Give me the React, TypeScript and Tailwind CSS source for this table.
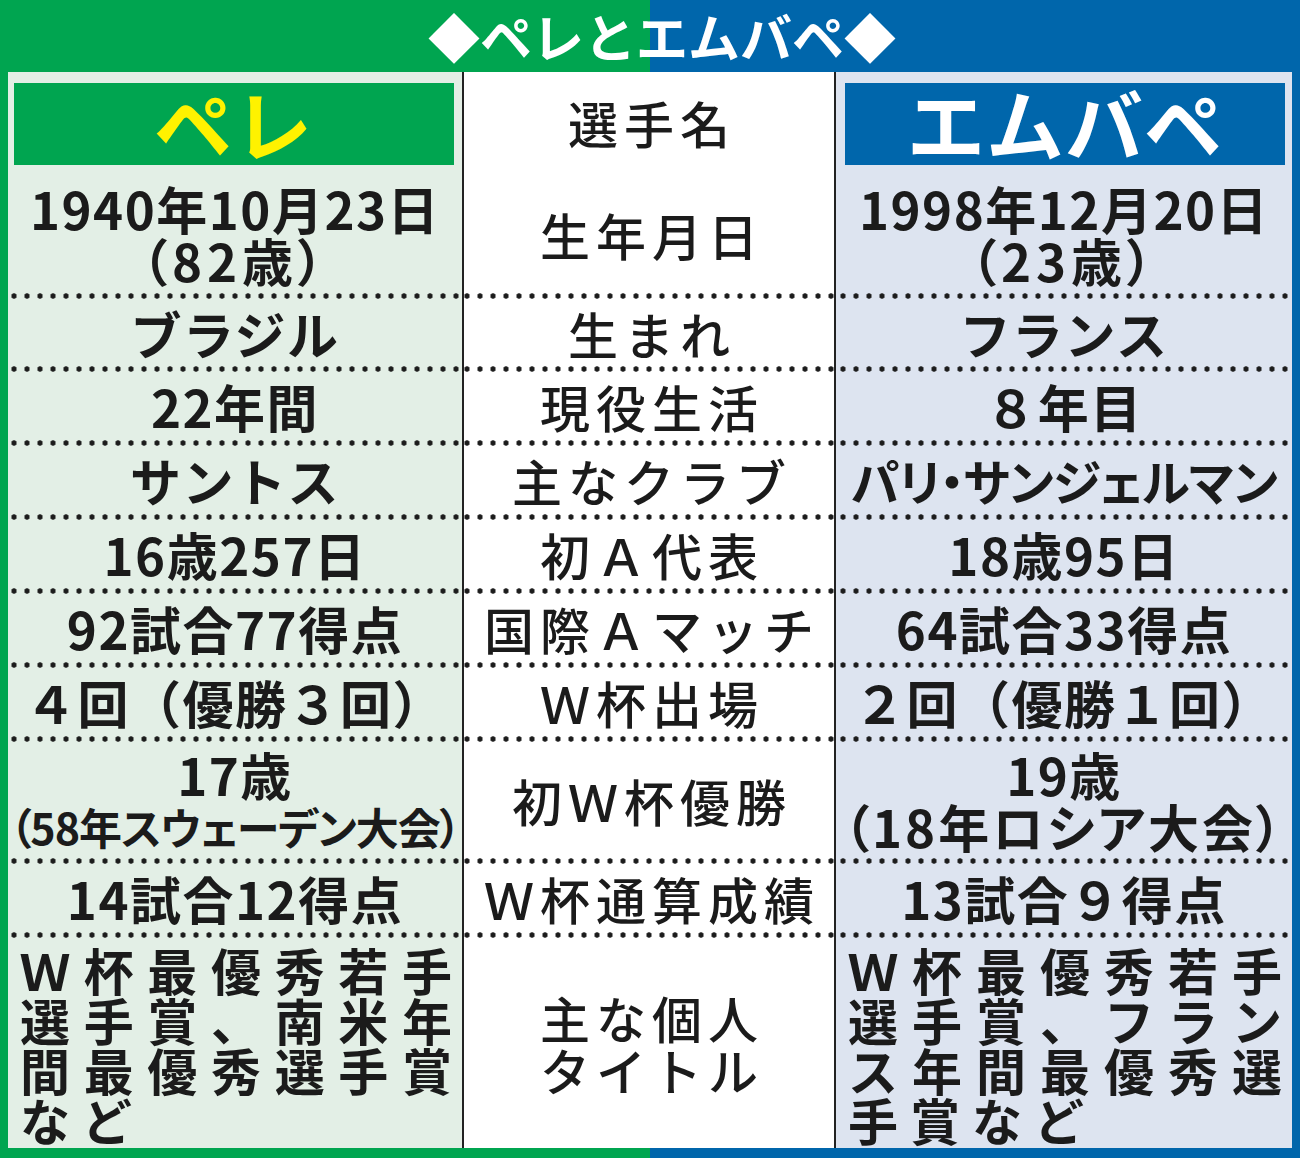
const dots =
  "bg-[radial-gradient(circle,#1c1c1c_2.4px,transparent_3px)] bg-[length:13px_6px] bg-bottom bg-repeat-x";

type Cell = string | string[];

interface RowProps {
  h: string;
  left: Cell;
  mid: Cell;
  right: Cell;
  leftSub?: string;
  rightSub?: string;
  rightMain?: string;
}

const Lines = ({ value, sub, main = "" }: { value: Cell; sub: string; main?: string }) => {
  if (typeof value === "string") return <span className={`whitespace-nowrap ${main}`}>{value}</span>;
  return (
    <div className="flex flex-col items-center whitespace-nowrap">
      <span className="leading-[52px]">{value[0]}</span>
      <span className={sub}>{value[1]}</span>
    </div>
  );
};

const paren = "[font-feature-settings:'palt'] leading-[52px] tracking-[5px]";

const Row = ({ h, left, mid, right, leftSub = paren, rightSub = paren, rightMain = "" }: RowProps) => (
  <div className={`grid grid-cols-[456px_372px_456px] ${h}`}>
    <div
      className={`flex items-center justify-center border-r-2 border-[#222] bg-[#e3efe6] pb-[6px] text-[51px] font-bold leading-[52px] tracking-[1.5px] text-[#1b1b1b] ${dots}`}
    >
      <Lines value={left} sub={leftSub} />
    </div>
    <div
      className={`flex items-center justify-center border-r-2 border-[#222] bg-white pb-[6px] pl-[6px] text-[50px] font-medium leading-[52px] tracking-[6px] text-[#1b1b1b] ${dots}`}
    >
      <Lines value={mid} sub="" />
    </div>
    <div
      className={`flex items-center justify-center bg-[#dde4f0] pb-[6px] text-[51px] font-bold leading-[52px] tracking-[1.5px] text-[#1b1b1b] ${dots}`}
    >
      <Lines value={right} sub={rightSub} main={rightMain} />
    </div>
  </div>
);

const rows: RowProps[] = [
  { h: "h-[125px]", left: ["1940年10月23日", "（82歳）"], mid: "生年月日", right: ["1998年12月20日", "（23歳）"] },
  { h: "h-[73px]", left: "ブラジル", mid: "生まれ", right: "フランス" },
  { h: "h-[74px]", left: "22年間", mid: "現役生活", right: "８年目" },
  {
    h: "h-[74px]",
    left: "サントス",
    mid: "主なクラブ",
    right: "パリ・サンジェルマン",
    rightMain: "[font-feature-settings:'palt'] text-[49px] tracking-[-1px]",
  },
  { h: "h-[74px]", left: "16歳257日", mid: "初Ａ代表", right: "18歳95日" },
  { h: "h-[74px]", left: "92試合77得点", mid: "国際Ａマッチ", right: "64試合33得点" },
  { h: "h-[74px]", left: "４回（優勝３回）", mid: "Ｗ杯出場", right: "２回（優勝１回）" },
  {
    h: "h-[122px]",
    left: ["17歳", "（58年スウェーデン大会）"],
    mid: "初Ｗ杯優勝",
    right: ["19歳", "（18年ロシア大会）"],
    leftSub: "[font-feature-settings:'palt'] text-[43px] leading-[52px] tracking-[-1px]",
    rightSub: "[font-feature-settings:'palt'] leading-[52px] tracking-[3px]",
  },
  { h: "h-[74px]", left: "14試合12得点", mid: "Ｗ杯通算成績", right: "13試合９得点" },
];

const TitleLines = ({ lines }: { lines: string[] }) => (
  <div className="flex flex-col text-[50px] font-bold leading-[50px] text-[#1b1b1b]">
    {lines.map((line, i) => (
      <div
        key={i}
        className={
          i < lines.length - 1
            ? "w-full whitespace-nowrap [text-align-last:justify]"
            : "w-full whitespace-nowrap tracking-[12px]"
        }
      >
        {line}
      </div>
    ))}
  </div>
);

export default function App() {
  return (
    <div className="h-[1158px] w-[1300px] overflow-hidden bg-[linear-gradient(to_right,#00a550_50%,#0066ab_50%)] font-['Noto_Sans_CJK_JP',sans-serif]">
      <div className="flex h-[72px] items-center justify-center pl-[24px] text-[52px] font-bold leading-none text-white">
        ◆ペレとエムバペ◆
      </div>

      <div className="mx-[8px] flex flex-col">
        <div className="grid h-[102px] grid-cols-[456px_372px_456px] border-b-2 border-[#222]">
          <div className="border-r-2 border-[#222] bg-[#e3efe6] pb-[11px] pl-[6px] pr-[8px] pt-[11px]">
            <div className="flex h-full items-center justify-center bg-[#00a550] pb-[4px] text-[78px] font-bold leading-none tracking-[2px] text-[#fff200]">
              ペレ
            </div>
          </div>
          <div className="flex items-center justify-center border-r-2 border-[#222] bg-white pb-[4px] pl-[6px] text-[50px] font-medium leading-none tracking-[6px] text-[#1b1b1b]">
            選手名
          </div>
          <div className="bg-[#dde4f0] pb-[11px] pl-[9px] pr-[7px] pt-[11px]">
            <div className="flex h-full items-center justify-center bg-[#0066ab] pb-[4px] text-[78px] font-bold leading-none tracking-[1px] text-white">
              エムバペ
            </div>
          </div>
        </div>

        {rows.map((r, i) => (
          <Row key={i} {...r} />
        ))}

        <div className="grid h-[210px] grid-cols-[456px_372px_456px]">
          <div className="border-r-2 border-[#222] bg-[#e3efe6] pl-[12px] pr-[10px] pt-[6px]">
            <TitleLines lines={["Ｗ杯最優秀若手", "選手賞、南米年", "間最優秀選手賞", "など"]} />
          </div>
          <div className="flex items-center justify-center border-r-2 border-[#222] bg-white pl-[6px] text-[50px] font-medium leading-[52px] tracking-[6px] text-[#1b1b1b]">
            <div className="flex flex-col">
              <span>主な個人</span>
              <span>タイトル</span>
            </div>
          </div>
          <div className="bg-[#dde4f0] pl-[12px] pr-[10px] pt-[6px]">
            <TitleLines lines={["Ｗ杯最優秀若手", "選手賞、フラン", "ス年間最優秀選", "手賞など"]} />
          </div>
        </div>
      </div>
    </div>
  );
}
